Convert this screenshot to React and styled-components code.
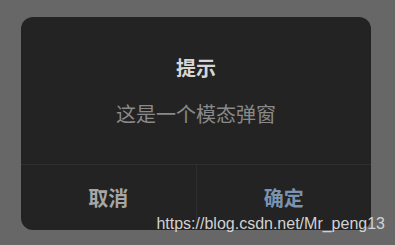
import React from 'react';
import styled, { createGlobalStyle } from 'styled-components';

const GlobalStyle = createGlobalStyle`
  html, body {
    margin: 0;
    padding: 0;
    background-color: #676767;
  }
  body {
    font-family: 'Noto Sans CJK SC', 'Noto Sans', sans-serif;
  }
`;

const Screen = styled.div`
  position: relative;
  width: 395px;
  height: 245px;
  padding: 17px 0 0 21px;
  box-sizing: border-box;
  background-color: #676767;
  overflow: hidden;
`;

const Dialog = styled.div`
  width: 350px;
  height: 213px;
  background-color: #232323;
  border-radius: 12px;
  display: flex;
  flex-direction: column;
  overflow: hidden;
`;

const Body = styled.div`
  flex: 1;
  display: flex;
  flex-direction: column;
  align-items: center;
  padding-top: 38px;
  gap: 20px;
`;

const Title = styled.div`
  font-size: 20px;
  line-height: 26px;
  font-weight: 700;
  color: #d6d6d6;
`;

const Message = styled.div`
  font-size: 20px;
  line-height: 26px;
  color: #8a8a8a;
`;

const Footer = styled.div`
  height: 65px;
  display: flex;
  border-top: 1px solid #2e2e2e;
`;

const Action = styled.div`
  flex: 1;
  display: flex;
  align-items: center;
  justify-content: center;
  font-size: 20px;
  font-weight: 700;
  color: ${p => (p.$primary ? '#7b93b1' : '#a6a6a6')};
  & + & {
    border-left: 1px solid #2e2e2e;
  }
`;

const Watermark = styled.div`
  position: absolute;
  right: 10px;
  top: 213px;
  font-family: 'Liberation Sans', Arial, sans-serif;
  font-size: 16px;
  line-height: 22px;
  color: #d2d2d2;
`;

export default function App() {
  return (
    <>
      <GlobalStyle />
      <Screen>
        <Dialog>
          <Body>
            <Title>提示</Title>
            <Message>这是一个模态弹窗</Message>
          </Body>
          <Footer>
            <Action>取消</Action>
            <Action $primary>确定</Action>
          </Footer>
        </Dialog>
        <Watermark>https://blog.csdn.net/Mr_peng13</Watermark>
      </Screen>
    </>
  );
}
